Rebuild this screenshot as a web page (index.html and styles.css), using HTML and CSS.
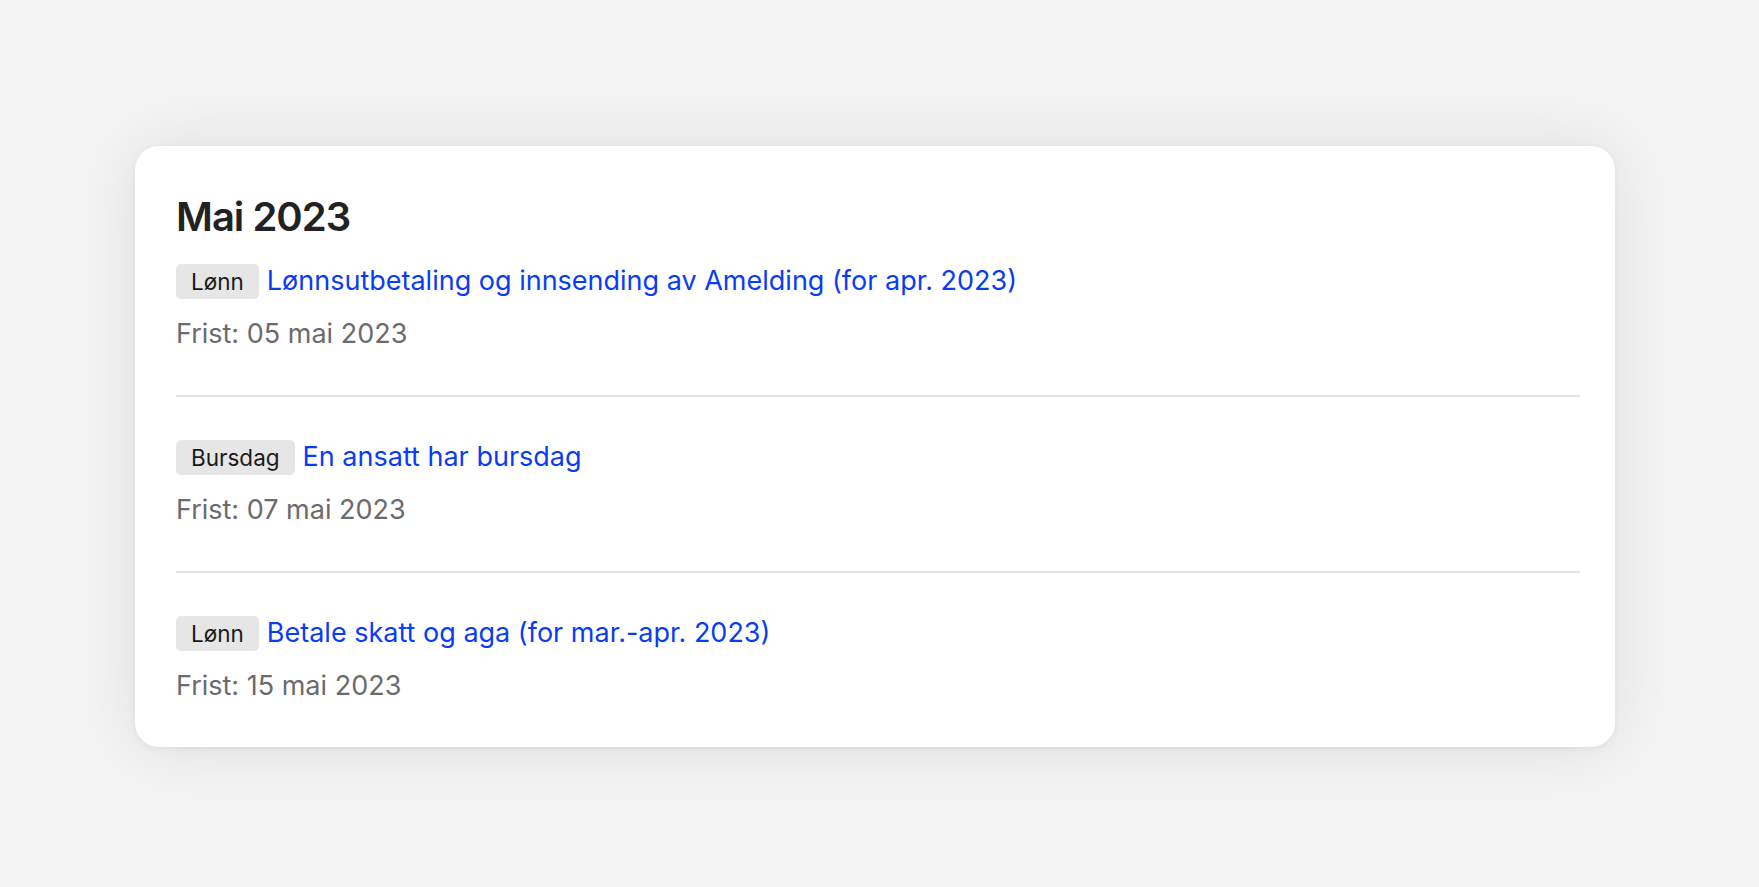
FILE: index.html
```html
<!DOCTYPE html>
<html lang="no">
<head>
    <meta charset="UTF-8">
    <meta name="viewport" content="width=device-width, initial-scale=1.0">
    <title>Frister - Mai 2023</title>
    <link rel="stylesheet" href="styles.css">
</head>
<body>

    <div class="page">
        <div class="deadline-card">
            <h2 class="month-title">Mai 2023</h2>

            <div class="deadline-item">
                <div class="deadline-head">
                    <span class="deadline-tag">Lønn</span>
                    <a href="#" class="deadline-link">Lønnsutbetaling og innsending av Amelding (for apr. 2023)</a>
                </div>
                <div class="deadline-date">Frist: 05 mai 2023</div>
            </div>

            <div class="deadline-item">
                <div class="deadline-head">
                    <span class="deadline-tag">Bursdag</span>
                    <a href="#" class="deadline-link">En ansatt har bursdag</a>
                </div>
                <div class="deadline-date">Frist: 07 mai 2023</div>
            </div>

            <div class="deadline-item">
                <div class="deadline-head">
                    <span class="deadline-tag">Lønn</span>
                    <a href="#" class="deadline-link">Betale skatt og aga (for mar.-apr. 2023)</a>
                </div>
                <div class="deadline-date">Frist: 15 mai 2023</div>
            </div>
        </div>
    </div>

</body>
</html>
```

FILE: styles.css
```css
:root {
    --page-background: #f4f4f4;
    --card-background: #ffffff;
    --text-dark: #222222;
    --text-muted: #6b6b6b;
    --link-color: #0a3cf5;
    --tag-background: #e6e6e6;
    --divider-color: #e3e3e3;
    --card-radius: 24px;
}

* {
    margin: 0;
    padding: 0;
    box-sizing: border-box;
}

body {
    font-family: Inter, 'Noto Sans', sans-serif;
    background-color: var(--page-background);
    color: var(--text-dark);
    min-height: 100vh;
}

.page {
    padding: 146px 144px 0 135px;
}

/* Card */
.deadline-card {
    background-color: var(--card-background);
    border-radius: var(--card-radius);
    padding: 47px 35px 0 41px;
    box-shadow: 0 0 70px rgba(0, 0, 0, 0.09), 0 2px 6px rgba(0, 0, 0, 0.06);
}

.month-title {
    font-size: 40px;
    line-height: 48px;
    font-weight: 600;
    letter-spacing: -1px;
    color: var(--text-dark);
}

/* Items */
.deadline-item {
    padding: 43px 0 46px;
    border-bottom: 2px solid var(--divider-color);
}

.deadline-item:first-of-type {
    padding-top: 23px;
}

.deadline-item:last-child {
    border-bottom: none;
}

.deadline-head {
    display: flex;
    align-items: baseline;
    gap: 8px;
    height: 35px;
}

.deadline-tag {
    background-color: var(--tag-background);
    color: #1a1a1a;
    font-size: 22.5px;
    line-height: 27px;
    padding: 4px 15px;
    border-radius: 5px;
}

.deadline-link {
    color: var(--link-color);
    font-size: 27px;
    line-height: 30px;
    text-decoration: none;
}

.deadline-date {
    margin-top: 20px;
    color: var(--text-muted);
    font-size: 27px;
    line-height: 30px;
}
```
